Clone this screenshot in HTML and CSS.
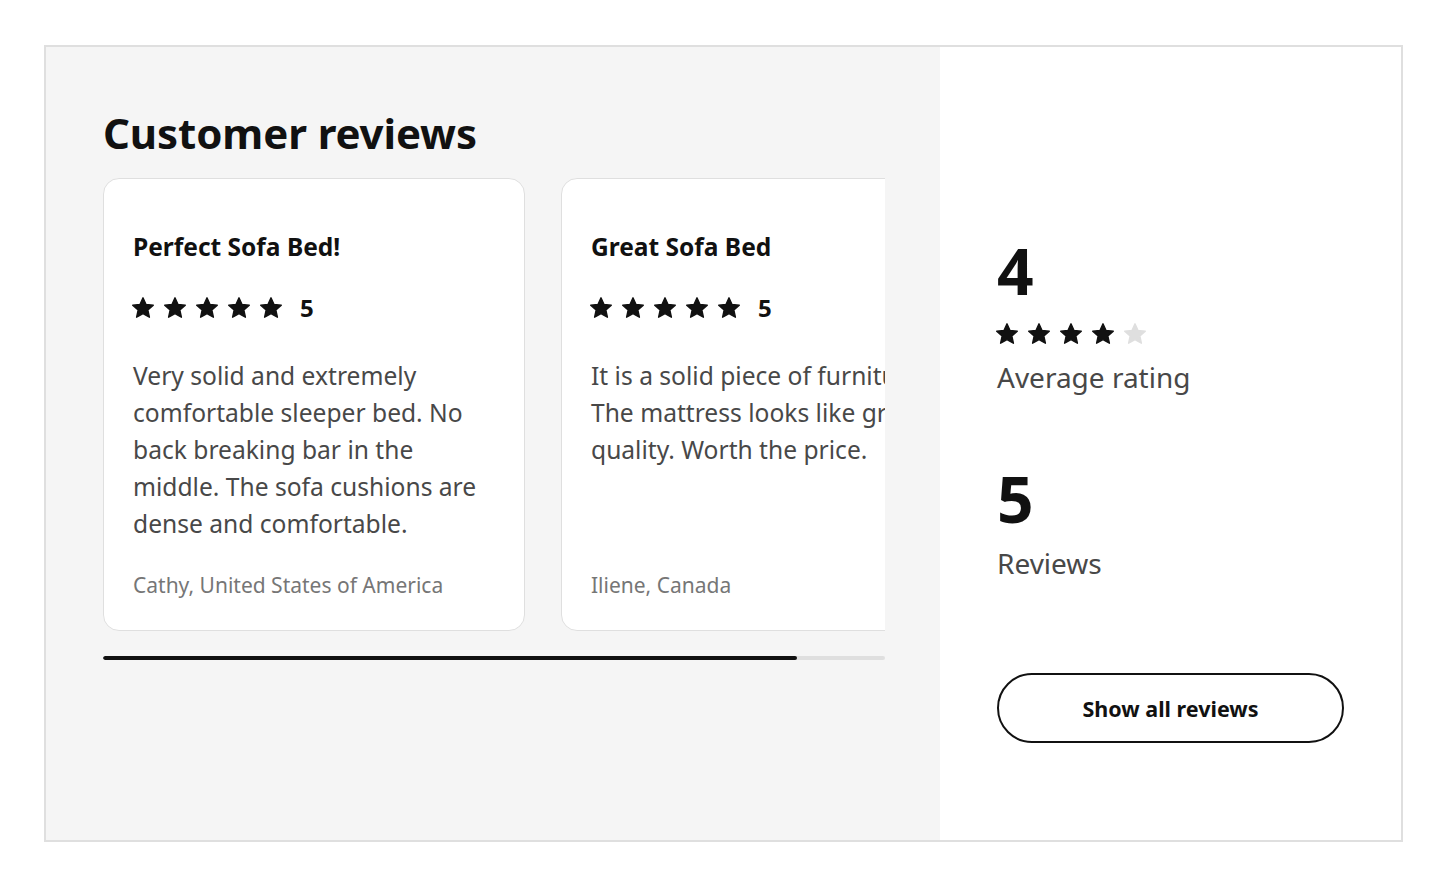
FILE: index.html
```html
<!DOCTYPE html>
<html lang="en">
<head>
<meta charset="utf-8">
<title>Customer reviews</title>
<link rel="stylesheet" href="styles.css">
</head>
<body>
<svg width="0" height="0" class="defs" aria-hidden="true">
  <defs>
    <symbol id="star" viewBox="0 0 24 24">
      <path d="M12 2.6l2.8 6.1 6.7.7-5 4.5 1.4 6.6L12 17.1l-5.9 3.4 1.4-6.6-5-4.5 6.7-.7z" stroke-linejoin="round" stroke-width="1.3"/>
    </symbol>
  </defs>
</svg>
<section class="reviews">
  <div class="left">
    <h2 class="heading">Customer reviews</h2>
    <div class="carousel">
      <div class="track">
        <article class="card">
          <h3 class="card-title">Perfect Sofa Bed!</h3>
          <div class="rating">
            <svg class="star on"><use href="#star"/></svg>
            <svg class="star on"><use href="#star"/></svg>
            <svg class="star on"><use href="#star"/></svg>
            <svg class="star on"><use href="#star"/></svg>
            <svg class="star on"><use href="#star"/></svg>
            <span class="rating-num">5</span>
          </div>
          <p class="card-text">Very solid and extremely comfortable sleeper bed. No back breaking bar in the middle. The sofa cushions are dense and comfortable.</p>
          <p class="card-author">Cathy, United States of America</p>
        </article>
        <article class="card">
          <h3 class="card-title">Great Sofa Bed</h3>
          <div class="rating">
            <svg class="star on"><use href="#star"/></svg>
            <svg class="star on"><use href="#star"/></svg>
            <svg class="star on"><use href="#star"/></svg>
            <svg class="star on"><use href="#star"/></svg>
            <svg class="star on"><use href="#star"/></svg>
            <span class="rating-num">5</span>
          </div>
          <p class="card-text">It is a solid piece of furniture. The mattress looks like great quality. Worth the price.</p>
          <p class="card-author">Iliene, Canada</p>
        </article>
      </div>
    </div>
    <div class="scrollbar"><div class="thumb"></div></div>
  </div>
  <aside class="right">
    <div class="stat">
      <div class="big">4</div>
      <div class="rating big-stars">
        <svg class="star on"><use href="#star"/></svg>
        <svg class="star on"><use href="#star"/></svg>
        <svg class="star on"><use href="#star"/></svg>
        <svg class="star on"><use href="#star"/></svg>
        <svg class="star off"><use href="#star"/></svg>
      </div>
      <div class="label">Average rating</div>
    </div>
    <div class="stat stat-reviews">
      <div class="big">5</div>
      <div class="label">Reviews</div>
    </div>
    <button class="btn" type="button">Show all reviews</button>
  </aside>
</section>
</body>
</html>
```
FILE: styles.css
```css
* { box-sizing: border-box; }
html, body { margin: 0; padding: 0; background: #fff; }
body {
  font-family: "Noto Sans", "Open Sans", sans-serif;
  color: #111;
}
.defs { position: absolute; width: 0; height: 0; overflow: hidden; }

.reviews {
  margin: 45px 0 0 44px;
  width: 1359px;
  height: 797px;
  border: 2px solid #dfdfdf;
  display: flex;
}

.left {
  width: 894px;
  background: #f5f5f5;
  padding: 61px 55px 0 57px;
}

.heading {
  margin: 0 0 20px 0;
  font-size: 42px;
  line-height: 50px;
  font-weight: 700;
  letter-spacing: -0.1px;
}

.carousel {
  width: 782px;
  overflow: hidden;
}
.track {
  display: flex;
  gap: 36px;
}
.card {
  flex: 0 0 422px;
  height: 453px;
  background: #fff;
  border: 1px solid #dfdfdf;
  border-radius: 16px;
  padding: 52px 29px 0 29px;
  display: flex;
  flex-direction: column;
}
.card-title {
  margin: 0;
  font-size: 24.5px;
  line-height: 32px;
  font-weight: 700;
}
.rating {
  display: flex;
  align-items: center;
  gap: 6px;
  margin-top: 32px;
  margin-left: -3px;
  height: 26px;
}
.star {
  width: 26px;
  height: 26px;
  flex: 0 0 26px;
}
.star.on { fill: #111; stroke: #111; }
.star.off { fill: #dfdfdf; stroke: #dfdfdf; }
.rating-num {
  font-size: 24px;
  font-weight: 700;
  margin-left: 10px;
  line-height: 26px;
}
.card-text {
  margin: 36px 0 0 0;
  font-size: 24.6px;
  line-height: 37px;
  color: #484848;
}
.card-author {
  margin: auto 0 30px 0;
  font-size: 21px;
  line-height: 30px;
  color: #767676;
}

.scrollbar {
  margin-top: 25px;
  width: 782px;
  height: 4px;
  background: #dfdfdf;
  border-radius: 2px;
  overflow: hidden;
}
.thumb {
  width: 694px;
  height: 100%;
  background: #111;
  border-radius: 2px;
}

.right {
  flex: 1;
  background: #fff;
  padding: 0 57px;
  display: flex;
  flex-direction: column;
}
.stat { display: flex; flex-direction: column; }
.stat:first-child { margin-top: 192px; }
.big {
  font-size: 64px;
  line-height: 64px;
  font-weight: 700;
}
.big-stars { margin-top: 18px; gap: 6px; }
.label {
  font-size: 28px;
  line-height: 40px;
  color: #484848;
  margin-top: 10px;
}
.stat-reviews { margin-top: 70px; }
.stat-reviews .label { margin-top: 12px; }
.btn {
  margin-top: 90px;
  width: 347px;
  height: 70px;
  border: 2px solid #111;
  border-radius: 35px;
  background: #fff;
  font-family: "Noto Sans", "Open Sans", sans-serif;
  font-size: 21.5px;
  font-weight: 700;
  color: #111;
  cursor: pointer;
}
```
